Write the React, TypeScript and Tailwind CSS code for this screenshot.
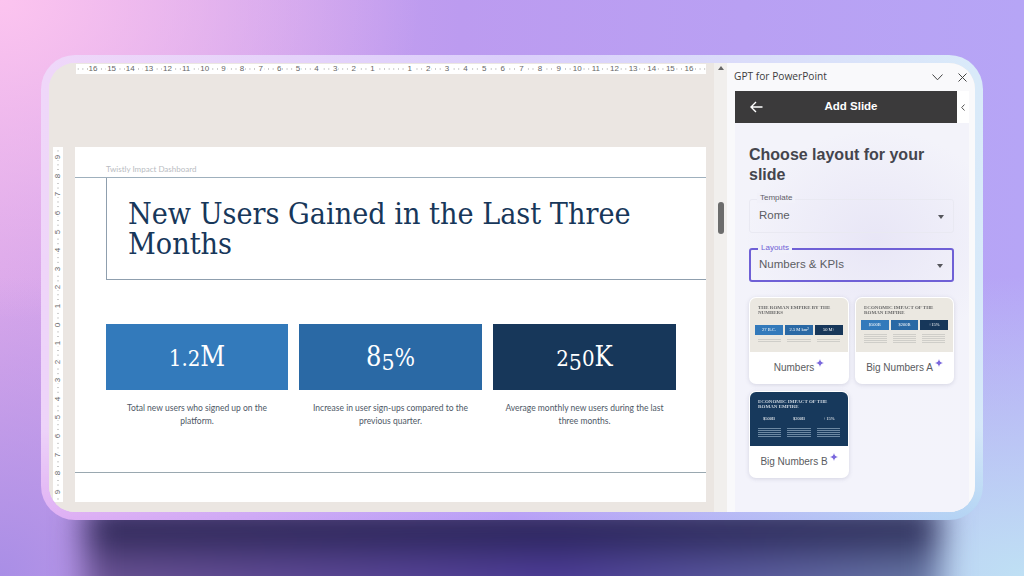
const sans = "font-['Liberation_Sans',Arial,sans-serif]";
const serif = "font-['Liberation_Serif','Times_New_Roman',serif]";
const lato = "font-['Lato','Open_Sans',sans-serif]";

const topTicks = ["16", "15", "14", "13", "12", "11", "10", "9", "8", "7", "6", "5", "4", "3", "2", "1", "", "1", "2", "3", "4", "5", "6", "7", "8", "9", "10", "11", "12", "13", "14", "15", "16"];
const sideTicks = ["9", "8", "7", "6", "5", "4", "3", "2", "1", "0", "1", "2", "3", "4", "5", "6", "7", "8", "9"];

// the slide font has old-style figures, so short digits sit on the baseline and 5 drops below it
const Low = ({ children }: { children: string }) => <span className="text-[22px]">{children}</span>;
const Drop = ({ children }: { children: string }) => <span className="relative top-[4px] text-[23px]">{children}</span>;

const stats = [
  { key: "a", value: <><Low>1.2</Low>M</>, bg: "bg-[#337abb]", text: "Total new users who signed up on the platform." },
  { key: "b", value: <>8<Drop>5</Drop><span className="text-[24px]">%</span></>, bg: "bg-[#2a69a5]", text: "Increase in user sign-ups compared to the previous quarter." },
  { key: "c", value: <><Low>2</Low><Drop>5</Drop><Low>0</Low>K</>, bg: "bg-[#17375a]", text: "Average monthly new users during the last three months." },
];

function Sparkle() {
  return (
    <svg width="8" height="8" viewBox="0 0 10 10" className="mb-[8px] shrink-0">
      <path d="M5 0 C5.4 3 7 4.6 10 5 C7 5.4 5.4 7 5 10 C4.6 7 3 5.4 0 5 C3 4.6 4.6 3 5 0Z" fill="#7a68dd" />
    </svg>
  );
}

function Thumb({ dark, title, boxes, detail }: { dark?: boolean; title: string[]; boxes: string[]; detail?: boolean }) {
  return (
    <div className={`h-[54px] px-[5px] pt-[7px] blur-[0.3px] ${dark ? "bg-[#17395c]" : "bg-[#ebe8e1]"}`}>
      <div className={`${serif} pl-[3px] text-[5px] font-bold leading-[5px] ${dark ? "text-[#c9d3dd]" : "text-[#6a6a6a]"}`}>
        {title.map((t) => <div key={t}>{t}</div>)}
      </div>
      <div className={`${detail ? "mt-[5px]" : "mt-[10px]"} flex gap-[2px]`}>
        {boxes.map((b, i) => (
          <div
            key={i}
            className={`flex h-[10px] flex-1 items-center justify-center ${serif} text-[4.5px] text-white ${
              dark ? "" : i === 0 ? "bg-[#337abb]" : i === 1 ? "bg-[#2a69a5]" : "bg-[#17375a]"
            }`}
          >
            {b}
          </div>
        ))}
      </div>
      <div className="mt-[4px] flex gap-[6px] px-[3px]">
        {boxes.map((_, i) => (
          <div key={i} className="flex flex-1 flex-col gap-[1px]">
            {(detail ? [0, 1, 2, 3, 4] : [0, 1]).map((l) => (
              <div key={l} className={`h-[1px] ${dark ? "bg-[#6d89a3]" : "bg-[#cfcec9]"}`} />
            ))}
          </div>
        ))}
      </div>
    </div>
  );
}

function Card({ label, children }: { label: string; children: React.ReactNode }) {
  return (
    <div className="h-[87px] overflow-hidden rounded-[7px] bg-white p-[1px] shadow-[0_1px_4px_rgba(90,90,130,0.2)]">
      <div className="overflow-hidden rounded-t-[6px]">{children}</div>
      <div className={`flex h-[30px] items-center justify-center gap-[2px] ${sans} text-[10px] text-[#5a5b60]`}>
        <span>{label}</span>
        <Sparkle />
      </div>
    </div>
  );
}

function SelectField({ label, value, active }: { label: string; value: string; active?: boolean }) {
  return (
    <div
      className={`relative flex h-[34px] items-center justify-between rounded-[3px] pr-[9px] ${
        active ? "border-2 border-[#6f60d6] pl-[8px]" : "border border-[#e9e9f2] pl-[9px]"
      }`}
    >
      <span
        className={`absolute left-[7px] top-[-7px] bg-[#f1f1f9] px-[3px] ${sans} text-[8px] leading-[10px] ${
          active ? "text-[#6f60d6]" : "text-[#5f6068]"
        }`}
      >
        {label}
      </span>
      <span className={`${sans} text-[11.5px] text-[#5c5d63]`}>{value}</span>
      <span className="mt-[2px] h-0 w-0 border-x-[3.5px] border-t-[4px] border-x-transparent border-t-[#55565c]" />
    </div>
  );
}

export default function App() {
  return (
    <div className="relative h-[576px] w-[1024px] overflow-hidden bg-[radial-gradient(ellipse_420px_320px_at_0%_0%,#fcc4ef_0%,rgba(252,196,239,0)_100%),radial-gradient(ellipse_320px_300px_at_0%_100%,#a98ee6_0%,rgba(169,142,230,0)_100%),radial-gradient(ellipse_500px_300px_at_100%_100%,#bfe0f4_0%,rgba(185,220,242,0)_100%),linear-gradient(90deg,#d9a7ea_0%,#bc9bf0_45%,#b6a5f6_100%)] pl-[41px] pt-[55px]">
      {/* drop shadow under the window */}
      <div className="absolute bottom-[-40px] left-[85px] right-[84px] top-[505px] bg-[linear-gradient(180deg,rgba(30,28,70,0.9)_14%,rgba(30,28,70,0)_65%),linear-gradient(90deg,#6d5596_0%,#4e3d9a_55%,#6a7ca8_100%)] blur-[16px]" />
      <div className="relative h-[465px] w-[942px] rounded-[34px] bg-[linear-gradient(180deg,rgba(255,255,255,0.5)_0%,rgba(255,255,255,0.45)_80%,rgba(255,255,255,0)_100%),linear-gradient(90deg,#e0b0f4_0%,#b79ef6_50%,#b4d6f4_100%)] p-[8px]">
        <div className="flex h-full overflow-hidden rounded-[26px] bg-[#ebe7e3]">
          {/* slide canvas */}
          <div className="w-[665px] shrink-0 bg-[#ebe6e2] pt-[1px]">
            <div className="ml-[27px] flex h-[10px] w-[630px] items-center justify-center bg-white bg-[linear-gradient(90deg,#c8c8c8_1px,transparent_1px)] bg-[length:4.656px_2px] bg-center bg-repeat-x">
              {topTicks.map((t, i) => (
                <span key={i} className="flex w-[18.625px] shrink-0 justify-center">
                  {t && <span className={`${sans} bg-white px-[1px] text-[8px] leading-none text-[#666]`}>{t}</span>}
                </span>
              ))}
            </div>
            <div className="mt-[73px] flex items-start gap-[12px] pl-[4px]">
              <div className="flex h-[355px] w-[10px] shrink-0 flex-col items-center justify-center bg-white bg-[linear-gradient(180deg,#c8c8c8_1px,transparent_1px)] bg-[length:2px_4.65px] bg-center bg-repeat-y">
                {sideTicks.map((t, i) => (
                  <span key={i} className="flex h-[18.6px] shrink-0 items-center">
                    <span className={`${sans} -rotate-90 bg-white px-[1px] text-[8px] leading-none text-[#666]`}>{t}</span>
                  </span>
                ))}
              </div>
              {/* slide */}
              <div className="flex h-[355px] w-[631px] shrink-0 flex-col bg-white">
                <div className={`${lato} h-[30px] pl-[31px] pt-[17px] text-[8px] leading-[10px] text-[#b9bcc2]`}>Twistly Impact Dashboard</div>
                <div className="h-[1px] bg-[#9fb0bd]" />
                <div className="ml-[31px] h-[102px] border-b border-l border-[#8f9fae] pl-[21px] pt-[21px]">
                  <h1 className="font-['DejaVu_Serif',Georgia,serif] text-[30.2px] leading-[30px] text-[#17375a] [font-stretch:condensed]">
                    New Users Gained in the Last Three<br />Months
                  </h1>
                </div>
                <div className="ml-[31px] mr-[30px] mt-[44px] grid grid-cols-[182px_183px_183px] gap-[11px]">
                  {stats.map((s) => (
                    <div key={s.key}>
                      <div className={`${s.bg} flex h-[66px] items-center justify-center font-['DejaVu_Serif',Georgia,serif] text-[27px] text-white [font-stretch:condensed]`}>
                        <span>{s.value}</span>
                      </div>
                      <p className={`${lato} mt-[12px] px-[10px] text-center text-[8.5px] leading-[13px] text-[#4e5866]`}>{s.text}</p>
                    </div>
                  ))}
                </div>
                <div className="mb-[29px] mt-auto h-[1px] bg-[#9aa8b0]" />
              </div>
            </div>
          </div>

          {/* scrollbar column */}
          <div className="flex w-[13px] shrink-0 flex-col items-center bg-[#f1efed] pt-[3px]">
            <span className="h-0 w-0 border-x-[3px] border-b-[4px] border-x-transparent border-b-[#666]" />
            <div className="mt-[132px] h-[32px] w-[6px] rounded-[3px] bg-[#6c6c6c]" />
          </div>

          {/* add-in pane */}
          <div className="flex min-w-0 flex-1 flex-col bg-[#f9f9fb] pl-[8px]">
            <div className="flex h-[28px] shrink-0 items-center justify-between pr-[8px]">
              <span className="ml-[-1px] font-['Open_Sans',sans-serif] text-[10.2px] font-medium text-[#3d3d3d]">GPT for PowerPoint</span>
              <div className="flex items-center gap-[15px]">
                <svg width="11" height="7" viewBox="0 0 11 7" fill="none" stroke="#444" strokeWidth="1">
                  <path d="M0.5 0.5 L5.5 5.8 L10.5 0.5" />
                </svg>
                <svg width="9" height="9" viewBox="0 0 9 9" fill="none" stroke="#444" strokeWidth="1">
                  <path d="M0.5 0.5 L8.5 8.5 M8.5 0.5 L0.5 8.5" />
                </svg>
              </div>
            </div>
            <div className="mr-[6px] flex h-[32px] shrink-0">
              <div className="relative flex w-[222px] items-center justify-center bg-[#3b3a3b] pl-[10px]">
                <svg width="13" height="12" viewBox="0 0 13 12" fill="none" stroke="#fff" strokeWidth="1.4" className="absolute left-[15px] top-[10px]">
                  <path d="M12.5 6 H1.2 M6 1 L1 6 L6 11" />
                </svg>
                <span className={`${sans} text-[11.5px] font-bold text-white`}>Add Slide</span>
              </div>
              <div className="flex flex-1 items-center justify-center bg-white">
                <svg width="4" height="7" viewBox="0 0 4 7" fill="none" stroke="#555" strokeWidth="1">
                  <path d="M3.5 0.5 L0.7 3.5 L3.5 6.5" />
                </svg>
              </div>
            </div>
            <div className="mr-[6px] min-h-0 flex-1 bg-[radial-gradient(ellipse_130px_110px_at_60%_30%,#e8e6f6_0%,rgba(232,230,246,0)_100%),linear-gradient(180deg,#f3f3fa_0%,#f3f3fb_100%)] px-[14px] pt-[22px]">
              <h2 className={`${sans} text-[16px] font-bold leading-[20px] text-[#44454d]`}>Choose layout for your slide</h2>
              <div className="mt-[14px] flex w-[205px] flex-col gap-[15px]">
                <SelectField label="Template" value="Rome" />
                <SelectField label="Layouts" value="Numbers & KPIs" active />
              </div>
              <div className="mt-[15px] grid w-[205px] grid-cols-[100px_99px] gap-x-[6px] gap-y-[7px]">
                <Card label="Numbers">
                  <Thumb title={["THE ROMAN EMPIRE BY THE", "NUMBERS"]} boxes={["27 B.C.", "2.5 M km²", "50 M+"]} />
                </Card>
                <Card label="Big Numbers A">
                  <Thumb title={["ECONOMIC IMPACT OF THE", "ROMAN EMPIRE"]} boxes={["$500B", "$200B", "+15%"]} detail />
                </Card>
                <Card label="Big Numbers B">
                  <Thumb dark title={["ECONOMIC IMPACT OF THE", "ROMAN EMPIRE"]} boxes={["$500B", "$200B", "+15%"]} detail />
                </Card>
              </div>
            </div>
          </div>
        </div>
      </div>
    </div>
  );
}
